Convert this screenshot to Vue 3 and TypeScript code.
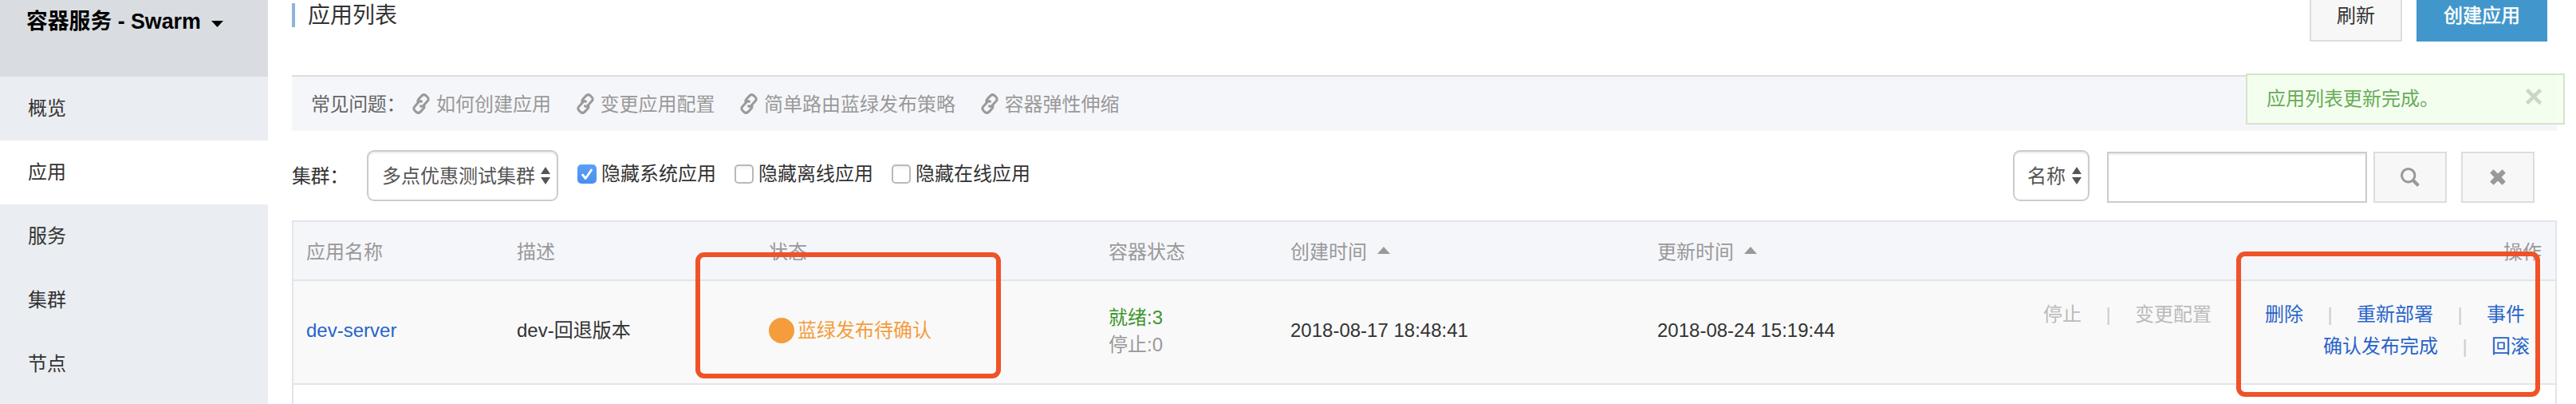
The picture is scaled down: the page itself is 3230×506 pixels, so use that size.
<script setup lang="ts">
interface Column { key: string; label: string; sortable?: boolean }
interface Action { label: string; disabled?: boolean }

const menu: string[] = ['概览', '应用', '服务', '集群', '节点']
const activeMenu = '应用'
const faqs: string[] = ['如何创建应用', '变更应用配置', '简单路由蓝绿发布策略', '容器弹性伸缩']
const filters = [
  { label: '隐藏系统应用', checked: true },
  { label: '隐藏离线应用', checked: false },
  { label: '隐藏在线应用', checked: false },
]
const columns: Column[] = [
  { key: 'name', label: '应用名称' },
  { key: 'desc', label: '描述' },
  { key: 'status', label: '状态' },
  { key: 'containers', label: '容器状态' },
  { key: 'created', label: '创建时间', sortable: true },
  { key: 'updated', label: '更新时间', sortable: true },
  { key: 'actions', label: '操作' },
]
const actionLines: Action[][] = [
  [
    { label: '停止', disabled: true },
    { label: '变更配置', disabled: true },
    { label: '删除' },
    { label: '重新部署' },
    { label: '事件' },
  ],
  [{ label: '确认发布完成' }, { label: '回滚' }],
]
</script>

<template>
  <div class="page" lang="zh-CN">
    <aside class="sidebar">
      <div class="product">
        <span>容器服务 - Swarm</span>
        <svg class="product-caret" width="15" height="8" viewBox="0 0 15 8"><path d="M0 0h15L7.5 8z" fill="#000" /></svg>
      </div>
      <nav>
        <a v-for="item in menu" :key="item" class="menu-item" :class="{ active: item === activeMenu }">{{ item }}</a>
      </nav>
    </aside>

    <main class="main">
      <header class="head">
        <h1 class="title">应用列表</h1>
        <div class="head-buttons">
          <button class="btn refresh">刷新</button>
          <button class="btn primary">创建应用</button>
        </div>
      </header>

      <section class="faq">
        <span class="faq-label">常见问题：</span>
        <a v-for="faq in faqs" :key="faq" class="faq-link">
          <svg class="link-icon" width="22" height="26" viewBox="0 0 22 26" fill="none" stroke="#999" stroke-width="3" stroke-linecap="round" stroke-linejoin="round">
            <path d="M7.2 11.2C6.4 9.4 6.8 8.2 8.2 6.7L11.9 2.9C13.6 1.2 15.5 1.2 17.2 2.8L18.9 4.5C20.6 6.2 20.6 8.1 18.9 9.8L13.7 15.5C12.7 16.5 11.5 16.5 10.5 15.8" />
            <path d="M14.6 14.8C15.4 16.6 15.2 17.8 13.8 19.3L10.1 23.1C8.4 24.8 6.5 24.8 4.8 23.2L3.1 21.5C1.4 19.8 1.4 17.9 3.1 16.2L8.3 10.5C9.3 9.5 10.5 9.5 11.5 10.2" />
          </svg>
          <span>{{ faq }}</span>
        </a>
      </section>

      <section class="toolbar">
        <span class="cluster-label">集群：</span>
        <div class="select cluster">
          <span>多点优惠测试集群</span>
          <svg width="12" height="22" viewBox="0 0 12 22"><path d="M6 0l6 9H0zM0 13h12l-6 9z" fill="#555" /></svg>
        </div>
        <div class="checks">
          <label v-for="f in filters" :key="f.label" class="check">
            <span class="box" :class="{ on: f.checked }">
              <svg v-if="f.checked" width="24" height="24" viewBox="0 0 24 24" fill="none" stroke="#fff" stroke-width="2.8" stroke-linecap="round" stroke-linejoin="round"><path d="M6.5 13l3.7 4.5L17.5 7" /></svg>
            </span>
            <span class="check-label">{{ f.label }}</span>
          </label>
        </div>
        <div class="search">
          <div class="select field">
            <span>名称</span>
            <svg width="12" height="22" viewBox="0 0 12 22"><path d="M6 0l6 9H0zM0 13h12l-6 9z" fill="#555" /></svg>
          </div>
          <input class="query" type="text" />
          <button class="btn icon-btn go">
            <svg width="24" height="24" viewBox="0 0 24 24" fill="none" stroke="#999"><circle cx="9.7" cy="9.7" r="8.2" stroke-width="3" /><path d="M15.4 15.4l7 7" stroke-width="4.2" /></svg>
          </button>
          <button class="btn icon-btn">
            <svg width="20" height="20" viewBox="0 0 20 20"><path d="M4.5 .2L10 5.4 15.5 .2 19.8 4.5 14.6 10l5.2 5.5-4.3 4.3L10 14.6l-5.5 5.2-4.3-4.3L5.4 10 .2 4.5z" fill="#999" /></svg>
          </button>
        </div>
      </section>

      <section class="table">
        <div class="row thead">
          <div v-for="c in columns" :key="c.key" class="cell" :class="c.key">
            <span>{{ c.label }}</span>
            <svg v-if="c.sortable" class="sort" width="16" height="9" viewBox="0 0 16 9"><path d="M8 0l8 9H0z" fill="#999" /></svg>
          </div>
        </div>
        <div class="row body">
          <div class="cell"><a class="link">dev-server</a></div>
          <div class="cell">dev-回退版本</div>
          <div class="cell state"><i class="dot"></i><span>蓝绿发布待确认</span></div>
          <div class="cell counts">
            <span class="ready">就绪:3</span>
            <span class="stopped">停止:0</span>
          </div>
          <div class="cell">2018-08-17 18:48:41</div>
          <div class="cell">2018-08-24 15:19:44</div>
          <div class="cell ops">
            <div v-for="(line, n) in actionLines" :key="n" class="op-line">
              <template v-for="(a, i) in line" :key="a.label">
                <span v-if="i > 0" class="sep">|</span>
                <a class="link" :class="{ disabled: a.disabled }">{{ a.label }}</a>
              </template>
            </div>
          </div>
        </div>
        <div class="row rest"></div>
      </section>
    </main>

    <div class="alert">
      <span>应用列表更新完成。</span>
      <svg width="20" height="20" viewBox="0 0 20 20"><path d="M1.5 1.5l17 17M18.5 1.5l-17 17" stroke="#ccd5c9" stroke-width="4.6" /></svg>
    </div>
    <div class="mark mark-status"></div>
    <div class="mark mark-ops"></div>
  </div>
</template>

<style>
body { margin: 0; background: #fff; overflow: hidden; }
</style>

<style scoped>
* { box-sizing: border-box; }
.page {
  position: relative;
  display: flex;
  width: 3230px;
  height: 506px;
  overflow: hidden;
  background: #fff;
  color: #333;
  font: 24px/34px "Liberation Sans", "Noto Sans CJK SC", sans-serif;
  white-space: nowrap;
}
svg { display: block; flex: none; }
.sidebar { flex: none; width: 336px; background: #eaedf1; }
.product {
  display: flex;
  align-items: center;
  height: 96px;
  padding: 0 0 43px 33px;
  background: #d9dde1;
  color: #000;
  font-size: 26.8px;
  font-weight: 700;
}
.product-caret { margin: 7px 0 0 13px; }
.menu-item { display: block; height: 80px; padding-left: 35px; line-height: 79px; }
.menu-item.active { background: #fff; }
.main { flex: none; width: 2840px; margin-left: 30px; }
.head { display: flex; justify-content: space-between; height: 94px; }
.title {
  height: 30px;
  margin: 4px 0 0;
  padding-left: 16px;
  border-left: 4px solid #8fb4dc;
  font-size: 28px;
  font-weight: 400;
  line-height: 32px;
}
.head-buttons { display: flex; gap: 18px; margin: -12px 12px 0 0; }
.btn {
  height: 64px;
  padding: 0;
  border: 2px solid #ddd;
  background: #f7f7f7;
  color: #333;
  font: inherit;
}
.refresh, .primary { padding-bottom: 1px; }
.refresh { width: 116px; }
.primary { width: 164px; border-color: #4197cb; background: #4197cb; color: #fff; -webkit-text-stroke: .5px #fff; }
.faq {
  display: flex;
  align-items: center;
  height: 70px;
  padding: 1px 0 0 24px;
  border-top: 2px solid #ddd;
  background: #f5f6fa;
  color: #999;
}
/* The full-width colon is drawn at the left of its box */
.faq-label { width: 127px; color: #666; }
.faq-label, .cluster-label { letter-spacing: -.4px; }
.faq-link { display: flex; align-items: center; gap: 8px; margin-right: 31.5px; }
.link-icon { margin-top: -1px; }
.toolbar { display: flex; height: 112px; padding-top: 24px; }
.cluster-label { width: 94px; line-height: 66px; }
.select {
  display: flex;
  align-items: center;
  justify-content: space-between;
  height: 64px;
  padding: 2px 8px 0 17px;
  border: 2px solid #ccc;
  border-radius: 9px;
  box-shadow: inset 0 2px 2px rgba(0, 0, 0, .075);
  color: #555;
}
.select svg { margin-top: -2px; }
.cluster { width: 240px; }
.checks { display: flex; gap: 23px; margin: 13px 0 0 24px; }
.check { display: flex; align-items: center; gap: 6px; height: 34px; }
.check-label { margin-top: -1px; }
.box {
  width: 24px;
  height: 24px;
  border: 2px solid #b9b9b9;
  border-radius: 5px;
  background: linear-gradient(#f4f4f4, #fff 30%);
}
.box.on { border: 0; background: linear-gradient(#5b9ff7, #478ff0); }
.search { display: flex; margin: 0 28px 0 auto; }
.field { width: 96px; padding-left: 16px; }
.query {
  width: 326px;
  height: 64px;
  margin: 2px 8px 0 22px;
  border: 2px solid #ccc;
  box-shadow: inset 0 2px 2px rgba(0, 0, 0, .075);
}
.icon-btn { display: flex; align-items: center; justify-content: center; width: 92px; margin-top: 2px; }
.go { margin-right: 18px; }
.table { border: solid #e1e6eb; border-width: 2px 2px 0; }
.row { display: grid; grid-template-columns: 264px 316px 426px 228px 460px 1fr 700px; border-bottom: 2px solid #e1e6eb; }
.cell { display: flex; align-items: center; padding-left: 16px; }
.thead { height: 74px; padding-top: 3px; background: #f5f6fa; color: #999; }
.thead .actions { justify-content: flex-end; padding-right: 17px; }
.sort { margin: -5px 0 0 13px; }
.body { height: 130px; padding-bottom: 5px; background: #f9f9f9; }
.link { color: #2864c8; }
.link.disabled { color: #bbb; }
.state { gap: 4px; color: #f59c3c; }
.dot { width: 32px; height: 32px; margin-top: 1px; border-radius: 50%; background: #f59c3c; }
.counts { flex-direction: column; align-items: flex-start; justify-content: center; padding-top: 3px; }
.ready { color: #3c962d; }
.stopped { color: #999; }
.ops { flex-direction: column; align-items: flex-end; justify-content: center; padding-right: 32px; }
.op-line { display: flex; height: 40px; line-height: 40px; }
.op-line:first-child { padding-right: 6px; }
.sep { width: 67px; color: #ccc; text-align: center; }
.rest { height: 40px; }
.alert {
  position: absolute;
  top: 92px;
  right: 14px;
  display: flex;
  justify-content: space-between;
  width: 400px;
  height: 64px;
  padding: 0 27px 0 24px;
  border: 2px solid #d5e4c8;
  background: rgba(244, 255, 237, .9);
  color: #67ac58;
  line-height: 59px;
}
.alert svg { margin-top: 17px; }
.mark { position: absolute; border: 6px solid #f05228; border-radius: 11px; }
.mark-status { left: 872px; top: 316px; width: 383px; height: 158px; }
.mark-ops { left: 2804px; top: 315px; width: 381px; height: 182px; }
</style>
